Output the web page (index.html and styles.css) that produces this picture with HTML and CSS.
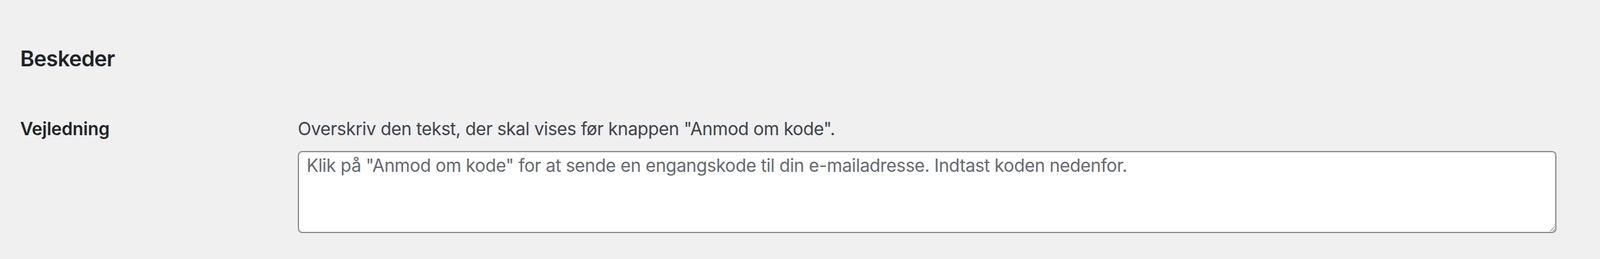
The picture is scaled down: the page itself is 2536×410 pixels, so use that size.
FILE: index.html
```html
<!DOCTYPE html>
<html>
<head>
  <title>Beskeder</title>
  <link rel="stylesheet" href="styles.css">
</head>
<body>
  <div class="wrap">
    <h2 class="title">Beskeder</h2>

    <div class="form-row">
      <label class="row-label" for="instructions">Vejledning</label>
      <div class="row-field">
        <p class="description">Overskriv den tekst, der skal vises før knappen "Anmod om kode".</p>
        <textarea id="instructions" name="instructions" class="field-text" placeholder="Klik på &quot;Anmod om kode&quot; for at sende en engangskode til din e-mailadresse. Indtast koden nedenfor."></textarea>
      </div>
    </div>
  </div>
</body>
</html>
```

FILE: styles.css
```css
body {
  margin: 0;
  padding: 0;
  background-color: #f0f0f1;
  font-family: Inter, "Liberation Sans", sans-serif;
  color: #3c434a;
}

.wrap {
  padding: 0 69px 0 32px;
}

.title {
  font-size: 34px;
  line-height: 47px;
  font-weight: 600;
  letter-spacing: -0.6px;
  color: #1d2327;
  margin: 69px 0 0;
}

.form-row {
  display: flex;
  margin-top: 70px;
}

.row-label {
  flex: 0 0 420px;
  font-size: 28px;
  line-height: 36px;
  font-weight: 600;
  letter-spacing: -0.15px;
  color: #1d2327;
}

.row-field {
  flex: 1;
  padding-left: 20px;
}

.description {
  margin: 0 0 17px;
  font-size: 28px;
  line-height: 36px;
  letter-spacing: -0.37px;
  color: #3c434a;
}

.field-text {
  display: block;
  box-sizing: border-box;
  width: 100%;
  height: 130px;
  margin: 0;
  padding: 1px 12px;
  border: 2px solid #8c8f94;
  border-radius: 7px;
  background: #fff;
  font-family: inherit;
  font-size: 28px;
  line-height: 40px;
  letter-spacing: -0.36px;
  color: #2c3338;
}

.field-text::placeholder {
  color: #646970;
  opacity: 1;
}
```
